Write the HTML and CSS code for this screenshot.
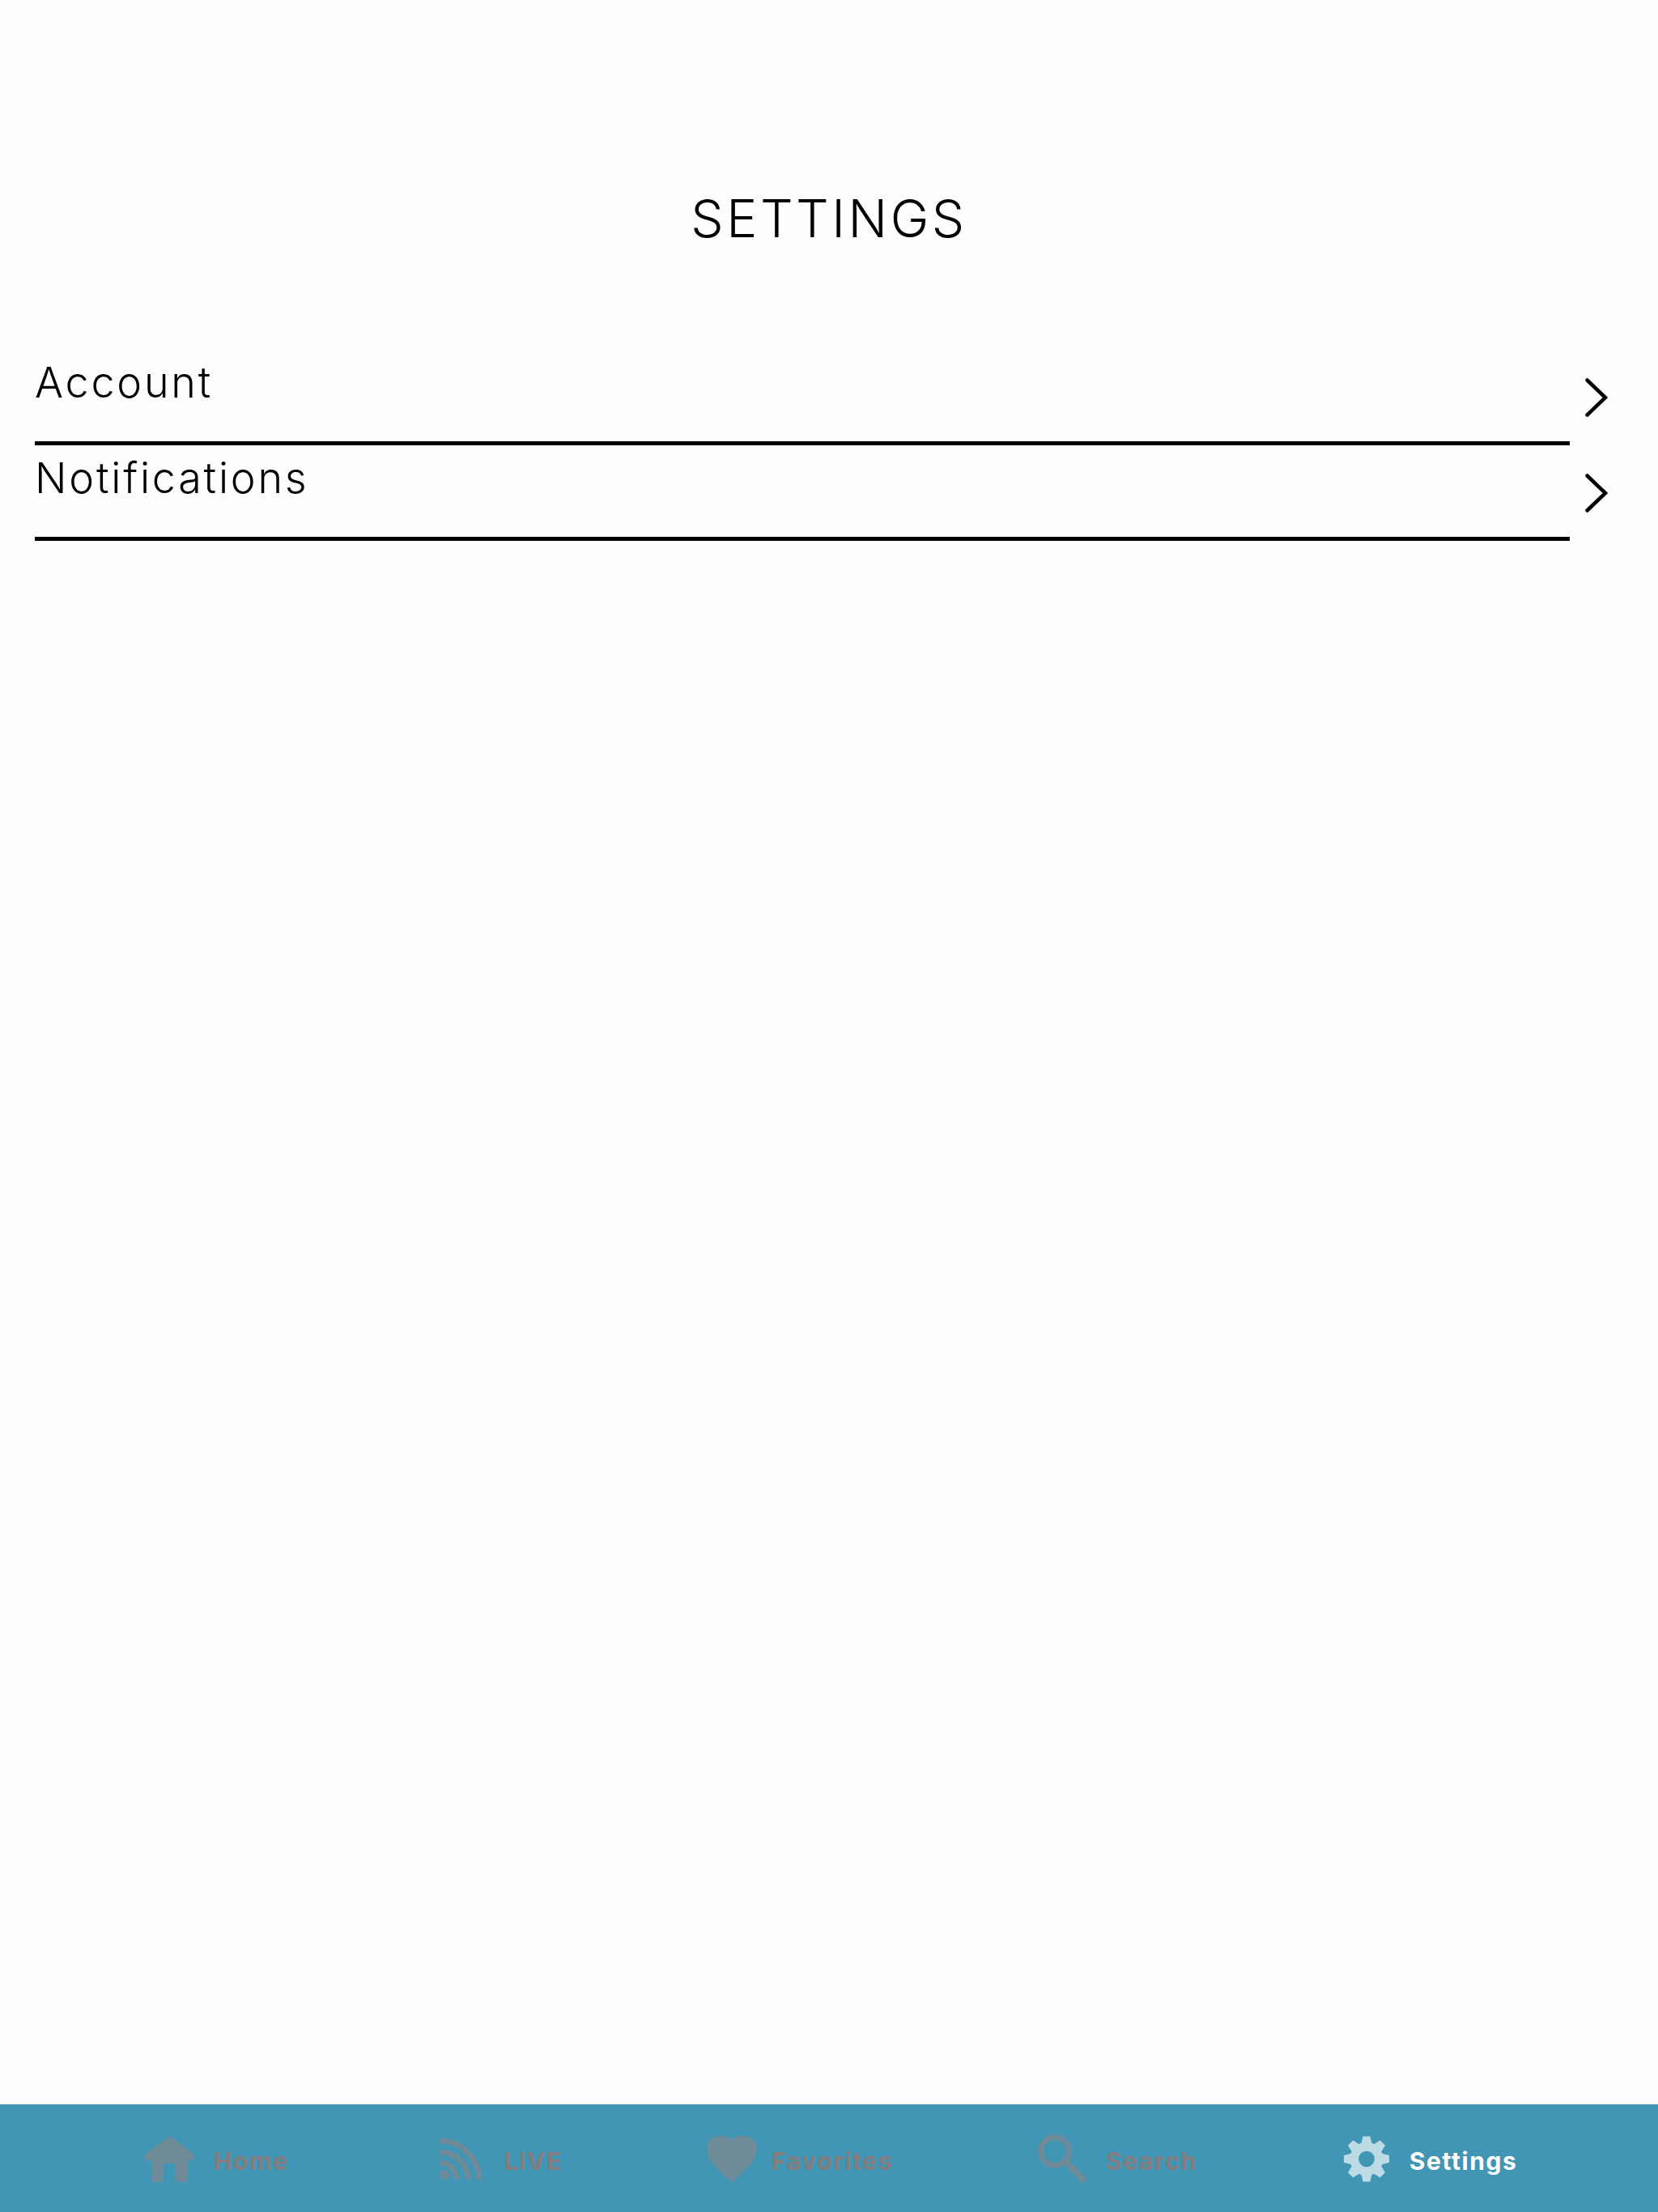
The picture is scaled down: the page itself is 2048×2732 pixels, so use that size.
FILE: index.html
```html
<!DOCTYPE html>
<html lang="en">
<head>
<meta charset="utf-8">
<title>Settings</title>
<link rel="stylesheet" href="styles.css">
</head>
<body>
<div class="page">
  <main class="main">
    <h1 class="title">SETTINGS</h1>
    <ul class="list">
      <li class="row">
        <span class="label">Account</span>
        <svg class="chevron" viewBox="0 0 28 48"><path d="M2.5 2.5 25 24 2.5 45.5"/></svg>
      </li>
      <li class="row">
        <span class="label">Notifications</span>
        <svg class="chevron" viewBox="0 0 28 48"><path d="M2.5 2.5 25 24 2.5 45.5"/></svg>
      </li>
    </ul>
  </main>
  <nav class="nav">
    <a class="tab tab-home">
      <svg class="icon" width="61" height="57" viewBox="0 0 61 57"><path d="M30.5 0 61 23V30H53V57H37.5V37Q37.5 33.5 34 33.5H27Q23 33.5 23 37V57H8V30H0V23Z"/></svg>
      <span class="tab-text">Home</span>
    </a>
    <a class="tab tab-live">
      <svg class="icon" width="52" height="51" viewBox="0 0 52 51"><ellipse cx="6" cy="45" rx="6" ry="6"/><path class="arc" d="M0 30A21.5 21 0 0 1 21.5 51M0 17A35.5 34 0 0 1 35.5 51M0 3A48.5 48 0 0 1 48.5 51"/></svg>
      <span class="tab-text">LIVE</span>
    </a>
    <a class="tab tab-fav">
      <svg class="icon" width="62" height="57" viewBox="0 0 62 57"><path d="M31 57C15 43 0 30 0 16 0 6 8 0 19 0 24 0 28 2 31 5 34 2 38 0 43 0 54 0 62 6 62 16 62 30 47 43 31 57Z"/></svg>
      <span class="tab-text">Favorites</span>
    </a>
    <a class="tab tab-search">
      <svg class="icon" width="61" height="61" viewBox="0 0 61 61"><circle class="lens" cx="21" cy="21" r="17.5"/><path class="handle" d="M35 34 58 58"/></svg>
      <span class="tab-text">Search</span>
    </a>
    <a class="tab tab-settings">
      <svg class="icon" width="56" height="57" viewBox="-28.5 -28.5 57 57">
        <circle class="gear-ring" r="15.5"/>
        <g class="gear-teeth">
          <path id="t" d="M-7-18-4.5-28.5H4.5L7-18Z"/>
          <use href="#t" transform="rotate(45)"/>
          <use href="#t" transform="rotate(90)"/>
          <use href="#t" transform="rotate(135)"/>
          <use href="#t" transform="rotate(180)"/>
          <use href="#t" transform="rotate(225)"/>
          <use href="#t" transform="rotate(270)"/>
          <use href="#t" transform="rotate(315)"/>
        </g>
      </svg>
      <span class="tab-text">Settings</span>
    </a>
  </nav>
</div>
</body>
</html>
```
FILE: styles.css
```css
* { box-sizing: border-box; }
html, body { margin: 0; padding: 0; background: #fefefe; }
.page {
  display: flex;
  flex-direction: column;
  width: 2048px;
  height: 2732px;
  font-family: Inter, "Liberation Sans", sans-serif;
}
.main { flex: 1; }
.title {
  margin: 0;
  padding-top: 230px;
  height: 432px;
  font-size: 64px;
  line-height: 80px;
  font-weight: 300;
  letter-spacing: 3.5px;
  text-align: center;
  color: #000;
}
.list { list-style: none; margin: 0; padding: 0 0 0 43px; }
.row {
  display: flex;
  align-items: flex-start;
  height: 118px;
}
.label {
  width: 1896px;
  height: 100%;
  padding-top: 10px;
  border-bottom: 5px solid #000;
  font-size: 52px;
  line-height: 62px;
  font-weight: 300;
  letter-spacing: 2.8px;
  color: #000;
}
.chevron {
  width: 28px;
  height: 48px;
  margin: 35px 0 0 19px;
  fill: none;
  stroke: #000;
  stroke-width: 4.5;
  stroke-linecap: round;
  stroke-linejoin: miter;
}
.nav {
  display: flex;
  align-items: center;
  height: 133px;
  padding: 1px 0 0 179px;
  background: #4195b5;
}
.tab {
  display: flex;
  align-items: center;
  color: #857c7e;
  font-size: 30px;
  line-height: 36px;
  font-weight: 700;
  letter-spacing: 1.6px;
}
.tab-text { padding-top: 6px; }
.icon { fill: #6f8b97; display: block; }
.tab-home .icon { margin-right: 24px; }
.tab-live { margin-left: 187px; }
.tab-live .icon { margin-right: 27px; }
.tab-fav { margin-left: 178px; }
.tab-fav .icon { margin-right: 18px; }
.tab-search { margin-left: 179px; }
.tab-search .icon { margin-right: 23px; }
.tab-settings { margin-left: 181px; color: #fff; }
.tab-settings .icon { margin-right: 25px; fill: #bcdbe5; }
.arc { fill: none; stroke: #6f8b97; stroke-width: 7; }
.lens { fill: none; stroke: #6f8b97; stroke-width: 7; }
.handle { fill: none; stroke: #6f8b97; stroke-width: 8; }
.gear-ring { fill: none; stroke: #bcdbe5; stroke-width: 11; }
```
